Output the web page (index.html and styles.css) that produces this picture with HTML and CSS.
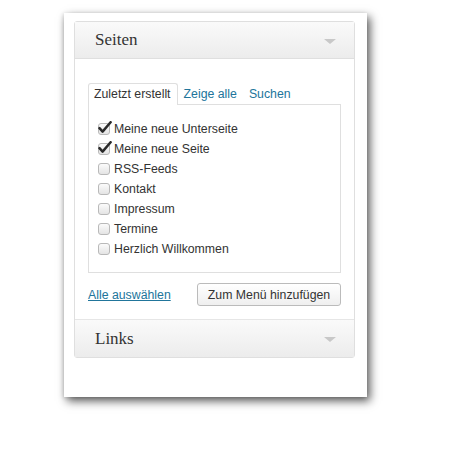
FILE: index.html
```html
<!DOCTYPE html>
<html lang="de">
<head>
  <meta charset="UTF-8">
  <title>Menüs - Seiten</title>
  <link rel="stylesheet" href="styles.css">
</head>
<body>

  <div class="card">
    <div class="widget">
      <div class="widget-head">
        <h3>Seiten</h3>
        <span class="arrow"></span>
      </div>
      <div class="widget-body">
        <ul class="tabs">
          <li class="tab active">Zuletzt erstellt</li>
          <li class="tab"><a href="#">Zeige alle</a></li>
          <li class="tab"><a href="#">Suchen</a></li>
        </ul>
        <div class="tab-panel">
          <label class="item"><span class="box checked"><svg width="14" height="13" viewBox="0 0 14 13"><path d="M1.5 7.2 L4.6 10.6 L12.6 1.2" fill="none" stroke="#2a2a2a" stroke-width="2.5" stroke-linecap="round" stroke-linejoin="round"/></svg></span>Meine neue Unterseite</label>
          <label class="item"><span class="box checked"><svg width="14" height="13" viewBox="0 0 14 13"><path d="M1.5 7.2 L4.6 10.6 L12.6 1.2" fill="none" stroke="#2a2a2a" stroke-width="2.5" stroke-linecap="round" stroke-linejoin="round"/></svg></span>Meine neue Seite</label>
          <label class="item"><span class="box"></span>RSS-Feeds</label>
          <label class="item"><span class="box"></span>Kontakt</label>
          <label class="item"><span class="box"></span>Impressum</label>
          <label class="item"><span class="box"></span>Termine</label>
          <label class="item"><span class="box"></span>Herzlich Willkommen</label>
        </div>
        <div class="actions">
          <a href="#" class="select-all">Alle auswählen</a>
          <button class="add-btn">Zum Menü hinzufügen</button>
        </div>
      </div>
      <div class="widget-head closed">
        <h3>Links</h3>
        <span class="arrow"></span>
      </div>
    </div>
  </div>

</body>
</html>
```

FILE: styles.css
```css
body {
  margin: 0;
  padding-bottom: 40px;
  background: #fff;
  font-family: "Liberation Sans", Arial, sans-serif;
  font-size: 12.3px;
  color: #333;
}

.card {
  width: 303px;
  height: 384px;
  margin: 13px 0 0 64px;
  padding: 8px 12px 0 10px;
  box-sizing: border-box;
  background: #fff;
  box-shadow: 3px 4px 9px rgba(0,0,0,0.65), -1px 1px 4px rgba(0,0,0,0.12);
}

.widget {
  border: 1px solid #dfdfdf;
  border-radius: 3px;
}

.widget-head {
  height: 36px;
  display: flex;
  align-items: center;
  justify-content: space-between;
  padding: 0 18px 0 20px;
  background: linear-gradient(#fafafa, #ececec);
  border-bottom: 1px solid #dfdfdf;
}

.widget-head.closed {
  border-bottom: none;
  border-top: 1px solid #e6e6e6;
  height: 37px;
}

.widget-head h3 {
  margin: 0;
  font-family: "Liberation Serif", "Times New Roman", serif;
  font-weight: normal;
  font-size: 17px;
  color: #333;
}

.arrow {
  width: 0;
  height: 0;
  border-left: 6px solid transparent;
  border-right: 6px solid transparent;
  border-top: 5px solid #c8c8c8;
  margin-top: 2px;
}

.widget-body {
  background: #fff;
  padding: 24px 13px 13px 13px;
}

.tabs {
  list-style: none;
  margin: 0;
  padding: 0;
  display: flex;
  align-items: flex-end;
}

.tab {
  height: 21px;
  line-height: 21px;
  padding: 0 5px;
  border: 1px solid transparent;
  border-bottom: none;
  margin-bottom: -1px;
}

.tab.active {
  padding: 0 6px 0 5px;
  border-color: #dfdfdf;
  border-radius: 3px 3px 0 0;
  background: #fff;
  color: #333;
  position: relative;
}

.tab a {
  color: #21759b;
  text-decoration: none;
}

.tab-panel {
  border: 1px solid #dfdfdf;
  padding: 14px 10px 13px 9px;
  display: flex;
  flex-direction: column;
}

.item {
  display: flex;
  align-items: center;
  height: 20px;
  gap: 3px;
  color: #333;
}

.box {
  position: relative;
  width: 10px;
  height: 10px;
  border: 1px solid #b9b9b9;
  border-radius: 3px;
  background: linear-gradient(#fbfbfb, #e4e4e4);
  margin-right: 1px;
}

.box svg {
  position: absolute;
  left: -1px;
  top: -3px;
}

.actions {
  display: flex;
  justify-content: space-between;
  align-items: center;
  margin-top: 10px;
}

.select-all {
  color: #21759b;
  text-decoration: underline;
}

.add-btn {
  width: 144px;
  height: 23px;
  font-family: inherit;
  font-size: 12.3px;
  color: #333;
  background: linear-gradient(#ffffff, #efefef);
  border: 1px solid #bbb;
  border-radius: 3px;
  padding: 0;
}
```
